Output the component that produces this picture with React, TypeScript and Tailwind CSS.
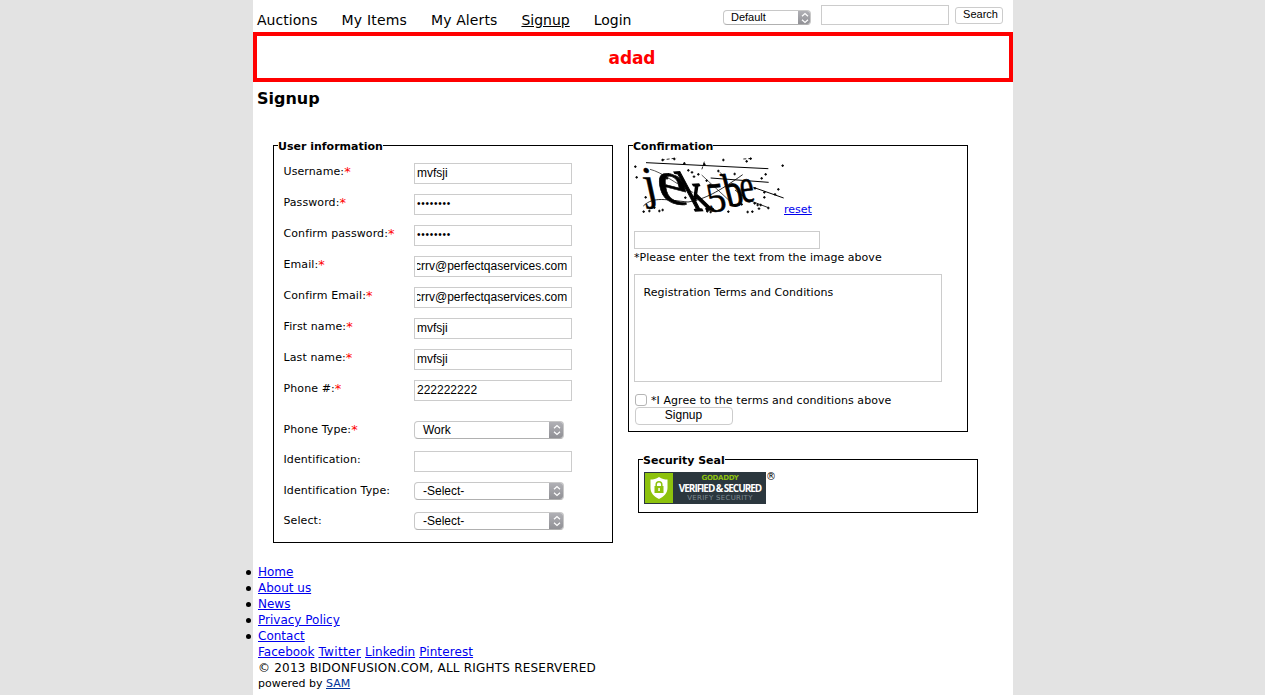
import { ReactNode } from "react";

const verdana = "font-['DejaVu_Sans',sans-serif]";
const helvetica = "font-['Liberation_Sans',sans-serif]";

function scrollToEnd(el: HTMLInputElement | null) {
  if (el) el.scrollLeft = el.scrollWidth;
}

function Select({ value, className, arrow }: { value: string; className: string; arrow: string }) {
  return (
    <button
      type="button"
      className={`flex shrink-0 items-stretch justify-between overflow-hidden rounded border border-[#c8c8c8] border-b-[#b0b0b0] bg-white text-left text-black ${helvetica} ${className}`}
    >
      <span className="self-center">{value}</span>
      <span className={`-my-px -mr-px flex items-center justify-center bg-linear-to-b from-[#b2b2b7] to-[#8f8f94] ${arrow}`}>
        <svg width="8" height="12" viewBox="0 0 8 12" fill="none" stroke="#fff" strokeWidth="1.2">
          <path d="M1 4.300 4 1.500l3 2.800M1 7.700 4 10.500l3-2.800" />
        </svg>
      </span>
    </button>
  );
}

function Row({ label, required, className, children }: { label: string; required?: boolean; className: string; children: ReactNode }) {
  return (
    <div className={`flex items-start ${className}`}>
      <label className="flex w-[130.5px] shrink-0 whitespace-nowrap pt-px leading-4 tracking-[0.1px]">
        <span>{label}</span>
        {required && <span className="text-[13px] text-[#f00]">*</span>}
      </label>
      {children}
    </div>
  );
}

function Field({ value, type = "text" }: { value: string; type?: string }) {
  const text = type === "password" ? "text-[10px] tracking-[0.75px]" : "text-xs";
  return (
    <input
      ref={scrollToEnd}
      type={type}
      defaultValue={value}
      className={`h-[21px] w-[158px] rounded-none border border-[#ccc] bg-white pl-0.5 pr-1 pb-0.5 leading-4 text-black outline-none ${helvetica} ${text}`}
    />
  );
}

const fields = [
  { label: "Username:", value: "mvfsji", type: "text" },
  { label: "Password:", value: "password", type: "password" },
  { label: "Confirm password:", value: "password", type: "password" },
  { label: "Email:", value: "crrv@perfectqaservices.com", type: "text" },
  { label: "Confirm Email:", value: "crrv@perfectqaservices.com", type: "text" },
  { label: "First name:", value: "mvfsji", type: "text" },
  { label: "Last name:", value: "mvfsji", type: "text" },
  { label: "Phone #:", value: "222222222", type: "text" },
];

const specks = [
  [46, 95], [50, 127], [128, 75], [193, 85], [145, 118], [141, 130], [216, 112], [205, 106], [222, 125], [253, 88], [310, 75], [380, 79],
  [392, 71], [488, 92], [437, 118], [425, 130], [344, 117], [295, 108], [235, 118], [77, 187], [196, 188], [475, 163], [465, 178], [433, 172],
  [433, 187], [404, 205], [422, 210], [417, 221], [365, 208], [383, 231], [397, 230], [325, 230], [272, 231], [262, 229], [118, 228], [103, 218],
  [71, 230], [88, 228], [163, 72], [445, 219], [128, 225], [260, 137], [270, 150], [405, 160], [413, 210],
];

function Captcha() {
  return (
    <svg width="150" height="60" viewBox="42 60 450 180" className="shrink-0 overflow-visible" aria-label="Verification image">
      <g fill="none" stroke="#000">
        <path strokeWidth="3" d="M78 83 445 101M272 129l174 13M400 157l91 32" />
        <path strokeWidth="2" d="M90 103c35 8 75 42 130 70M245 120l95 88" />
        <path strokeWidth="2.500" d="M70 213c30-30 70-18 134-12 50-8 90-30 164-82M345 165l40 30 60 23" />
        <path strokeWidth="2.500" strokeDasharray="9 6" d="M125 75l45-6M253 80l-9 28M300 112l20 22M370 72l30-2" />
      </g>
      <g fill="#000" stroke="#000" strokeWidth="1.500" fontFamily="Liberation Serif, serif">
        <text transform="matrix(1 0 .22 1 78 192)" fontSize="140">j</text>
        <text transform="matrix(1.4 .35 .2 1.25 118 193)" fontSize="150">e</text>
        <text transform="matrix(.8 -.05 .6 1.12 222 228)" fontSize="150" strokeWidth="4">k</text>
        <text transform="matrix(1 -.1 .2 1.1 268 232)" fontSize="112">5</text>
        <text transform="matrix(.75 -.1 .25 1 324 216)" fontSize="140" strokeWidth="3">b</text>
        <text transform="matrix(.75 -.1 .2 1.15 366 203)" fontSize="125">e</text>
      </g>
      <path fill="none" stroke="#000" strokeWidth="3" d={specks.map(([x, y]) => `M${x - 4} ${y}h8M${x} ${y - 4}v8`).join("")} />
    </svg>
  );
}

function Seal() {
  return (
    <div className="flex h-8 w-[122px] shrink-0 bg-[#2b373e]">
      <div className="flex w-[30px] shrink-0 items-center justify-center border border-[#2b373e] bg-[#8dc20d]">
        <svg width="20" height="24" viewBox="0 0 20 24">
          <path fill="#fff" d="M10 1c3 2 5.500 2.500 8.500 2.500V12c0 5-3.500 8.500-8.500 11C5 20.500 1.500 17 1.500 12V3.500C4.500 3.500 7 3 10 1Z" />
          <path fill="#8dc20d" d="M5.500 10h9v7h-9z" />
          <path fill="none" stroke="#8dc20d" strokeWidth="1.500" d="M7.200 10V8.500a2.800 2.800 0 0 1 5.600 0V10" />
          <path fill="#fff" d="M9.300 12h1.500v3H9.300z" />
        </svg>
      </div>
      <div className="flex flex-1 flex-col items-center whitespace-nowrap pt-0.5">
        <span className={`text-[7px] font-bold leading-[8px] tracking-[-0.3px] text-[#8dc20d] ${verdana}`}>GODADDY</span>
        <span className="font-['Open_Sans',sans-serif] text-[10px] font-bold leading-[12px] tracking-[-1.05px] text-white">VERIFIED &amp; SECURED</span>
        <span className={`text-[7px] leading-[8px] tracking-[0.3px] text-[#7e8b93] ${verdana}`}>VERIFY SECURITY</span>
      </div>
    </div>
  );
}

const footerLinks = ["Home", "About us", "News", "Privacy Policy", "Contact"];

export default function App() {
  const link = "text-[#00e] underline";
  const legend = "h-[13px] font-bold leading-[15px]";
  return (
    <div className={`h-[695px] overflow-hidden bg-[#e3e3e3] text-[11px] text-black ${verdana}`}>
      <div className="ml-[253px] h-full w-[760px] bg-white">
        <header className="flex h-8 items-start whitespace-nowrap pl-1">
          <nav className="flex w-[466px] gap-[24px] pt-[10px] text-sm leading-5">
            <a className="tracking-[0.03px]">Auctions</a>
            <a className="tracking-[0.2px]">My Items</a>
            <a className="tracking-[0.1px]">My Alerts</a>
            <a className="underline">Signup</a>
            <a>Login</a>
          </nav>
          <Select value="Default" className="mt-[10px] h-[15px] w-[88px] pl-[7px] pb-px text-[11px] leading-3" arrow="-mb-[2px] w-[13px]" />
          <input className="ml-[10px] mt-[5px] h-5 w-32 border border-[#ccc]" />
          <button className={`ml-[6px] mt-[7px] h-[17px] w-12 rounded-[3px] border border-[#ccc] pl-[3px] pb-0.5 text-[11px] leading-[13px] ${helvetica}`}>Search</button>
        </header>
        <div className="flex h-[50px] items-center justify-center border-4 border-[#f00] pr-0.5 pt-px text-[17px] font-bold leading-6 tracking-[-0.1px] text-[#f00]">adad</div>
        <h1 className="mt-[7px] pl-1 text-base font-bold leading-5">Signup</h1>

        <div className="mt-[30px] flex h-[425px] items-start pl-5">
          <fieldset className="h-[404px] w-[340px] border border-black pl-[10px]">
            <legend className={`-ml-[6px] ${legend}`}>User information</legend>
            <div className="-ml-[0.5px] pt-[11px]">
              {fields.map((f) => (
                <Row key={f.label} label={f.label} required className="h-[31px]">
                  <Field value={f.value} type={f.type} />
                </Row>
              ))}
              <Row label="Phone Type:" required className="mt-[10px] h-[30px]">
                <Select value="Work" className="h-[18px] w-[150px] pl-2 text-xs" arrow="w-[15px]" />
              </Row>
              <Row label="Identification:" className="h-[31px]">
                <Field value="" />
              </Row>
              <Row label="Identification Type:" className="h-[30px]">
                <Select value="-Select-" className="h-[18px] w-[150px] pl-2 text-xs" arrow="w-[15px]" />
              </Row>
              <Row label="Select:" className="h-[30px]">
                <Select value="-Select-" className="h-[18px] w-[150px] pl-2 text-xs" arrow="w-[15px]" />
              </Row>
            </div>
          </fieldset>

          <div className="ml-[15px]">
            <fieldset className="h-[293px] w-[340px] border border-black pl-[5px]">
              <legend className={`-ml-px ${legend}`}>Confirmation</legend>
              <div className="flex h-[79px] items-start pt-[3px]">
                <Captcha />
                <a className={`mt-[47px] leading-4 ${link}`}>reset</a>
              </div>
              <input className="block h-[18px] w-[186px] border border-[#ccc]" />
              <p className="h-[25px] pt-px leading-4 tracking-[0.03px]">*Please enter the text from the image above</p>
              <div className="h-[108px] w-[308px] border border-[#ccc] pl-[8.5px] pt-[10px] leading-4 tracking-[0.05px]">Registration Terms and Conditions</div>
              <label className="mt-[10px] flex h-[15px] items-start whitespace-nowrap pl-px leading-[18px] tracking-[0.07px]">
                <input type="checkbox" className="mr-1 mt-[2px] h-3 w-3 appearance-none rounded-[3px] border border-[#b5b5b5]" />
                *I Agree to the terms and conditions above
              </label>
              <button className={`ml-px block h-[18px] w-[98px] rounded border border-[#ccc] pb-0.5 pr-px text-xs leading-[14px] ${helvetica}`}>Signup</button>
            </fieldset>
            <fieldset className="ml-[10px] mt-[21px] h-[60px] w-[340px] border border-black pl-[5px]">
              <legend className={`-ml-px ${legend}`}>Security Seal</legend>
              <div className="flex pt-[6px]">
                <Seal />
                <span className="text-[10px] leading-[10px]">®</span>
              </div>
            </fieldset>
          </div>
        </div>

        <footer className="whitespace-nowrap pl-[5px] text-xs leading-4">
          <ul className="-ml-[12px]">
            {footerLinks.map((name) => (
              <li key={name} className="flex h-4 items-center gap-[7px]">
                <span className="h-[5px] w-[5px] rounded-full bg-black" />
                <a className={link}>{name}</a>
              </li>
            ))}
          </ul>
          <div className="flex gap-1">
            <a className={link}>Facebook</a>
            <a className={`tracking-[0.35px] ${link}`}>Twitter</a>
            <a className={link}>Linkedin</a>
            <a className={`tracking-[0.1px] ${link}`}>Pinterest</a>
          </div>
          <div className="tracking-[0.21px]">© 2013 BIDONFUSION.COM, ALL RIGHTS RESERVERED</div>
          <div className="text-[11px] leading-4">powered by <a className="text-[#039] underline">SAM</a></div>
        </footer>
      </div>
    </div>
  );
}
